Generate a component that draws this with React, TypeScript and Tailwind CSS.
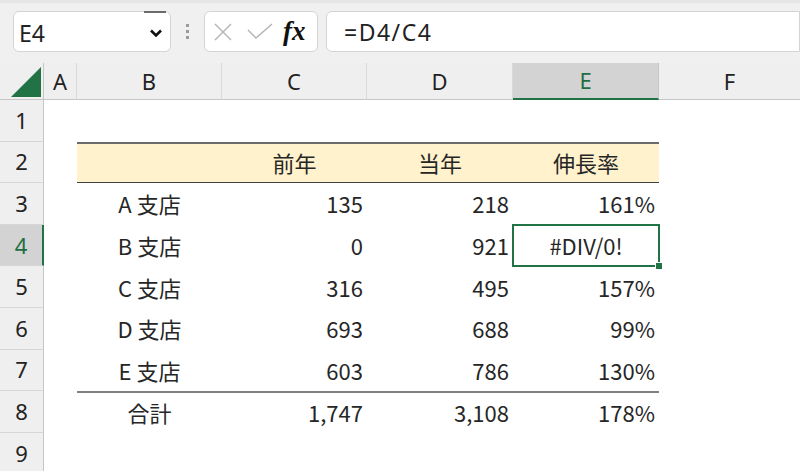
import React from "react";

const rows = [
  { n: 3, name: "A 支店", prev: "135", cur: "218", rate: "161%" },
  { n: 4, name: "B 支店", prev: "0", cur: "921", rate: "#DIV/0!" },
  { n: 5, name: "C 支店", prev: "316", cur: "495", rate: "157%" },
  { n: 6, name: "D 支店", prev: "693", cur: "688", rate: "99%" },
  { n: 7, name: "E 支店", prev: "603", cur: "786", rate: "130%" },
];

const sheetFont = { fontFamily: '"Noto Sans CJK JP", "Noto Sans", sans-serif' };
const uiFont = { fontFamily: '"Noto Sans", "Open Sans", sans-serif' };

function RowHead({ n, active }: { n: number; active?: boolean }) {
  return (
    <div
      className={
        "flex items-center justify-center border-b border-[#d6d6d6] border-r text-[22px] " +
        (active ? "bg-[#d3d3d3] text-[#1e6e42] border-r-2 border-r-[#217346]" : "bg-[#efefef] text-[#222] border-r-[#c6c6c6]")
      }
      style={uiFont}
    >
      {n}
    </div>
  );
}

function Cell({ children, align = "center", className = "" }: { children?: React.ReactNode; align?: "center" | "right"; className?: string }) {
  return (
    <div
      className={
        "flex items-center text-[22px] text-[#262626] " +
        (align === "right" ? "justify-end pr-[4px] " : "justify-center ") +
        className
      }
      style={sheetFont}
    >
      {children}
    </div>
  );
}

export default function App() {
  return (
    <div className="w-[800px] h-[471px] overflow-hidden bg-white flex flex-col">
      {/* formula bar */}
      <div className="shrink-0 h-[63px] bg-[#f0f0f0] border-t-[3px] border-t-[#e6e6e6] flex items-start pt-[8px]">
        <div className="relative ml-[13px] w-[158px] h-[41px] bg-white border border-[#d4d4d4] rounded-[6px] flex items-center justify-between pl-[5px] pr-[7px]">
          <span className="text-[23px] text-[#222] mt-[3px]" style={uiFont}>E4</span>
          <svg width="14" height="10" viewBox="0 0 14 10" className="mt-[2px]">
            <path d="M2 2.5 L7 7.5 L12 2.5" fill="none" stroke="#111" strokeWidth="2.6" />
          </svg>
          <div className="absolute top-[-1px] right-[4px] w-[22px] h-[2px] bg-[#6b6b6b]" />
        </div>
        <div className="w-[33px] h-[41px] flex flex-col items-center justify-center gap-[3px]">
          <div className="w-[3px] h-[3px] bg-[#9a9a9a]" />
          <div className="w-[3px] h-[3px] bg-[#9a9a9a]" />
          <div className="w-[3px] h-[3px] bg-[#9a9a9a]" />
        </div>
        <div className="w-[114px] h-[41px] bg-white border border-[#d4d4d4] rounded-[6px] flex items-center pl-[8px] gap-[14px]">
          <svg width="20" height="20" viewBox="0 0 20 20">
            <path d="M2 2 L18 18 M18 2 L2 18" stroke="#b3b3b3" strokeWidth="1.4" fill="none" />
          </svg>
          <svg width="26" height="18" viewBox="0 0 26 18">
            <path d="M1 7 L9 15 L25 1" stroke="#b3b3b3" strokeWidth="1.4" fill="none" />
          </svg>
          <span className="italic font-bold text-[27px] leading-none text-[#111] -ml-[4px]" style={{ fontFamily: '"Liberation Serif", serif' }}>
            fx
          </span>
        </div>
        <div className="ml-[8px] flex-1 h-[41px] bg-white border border-[#d4d4d4] rounded-l-[6px] flex items-center pl-[17px]">
          <span className="text-[23px] tracking-[1.5px] text-[#222] mt-[2px]" style={uiFont}>=D4/C4</span>
        </div>
      </div>

      {/* sheet */}
      <div className="shrink-0 grid grid-cols-[44px_33px_145px_145px_146px_146px_1fr] grid-rows-[37px_repeat(9,41.6px)]">
        {/* column headers */}
        <div className="bg-[#efefef] border-b border-[#c6c6c6] border-r border-r-[#c6c6c6] flex items-end justify-end pr-[2px] pb-[2px]">
          <svg width="30" height="30" viewBox="0 0 30 30">
            <path d="M30 0 L30 30 L0 30 Z" fill="#217346" />
          </svg>
        </div>
        {["A", "B", "C", "D"].map((c) => (
          <div key={c} className="bg-[#efefef] border-b border-[#c6c6c6] border-r border-r-[#d9d9d9] flex items-center justify-center text-[22px] text-[#222]" style={uiFont}>
            {c}
          </div>
        ))}
        <div className="bg-[#d3d3d3] border-b-2 border-[#217346] border-r border-r-[#c6c6c6] flex items-center justify-center text-[22px] text-[#1e6e42]" style={uiFont}>
          E
        </div>
        <div className="bg-[#efefef] border-b border-[#c6c6c6] flex items-center justify-center text-[22px] text-[#222]" style={uiFont}>
          F
        </div>

        {/* row 1 */}
        <RowHead n={1} />
        <div className="col-span-6" />

        {/* row 2 header */}
        <RowHead n={2} />
        <div />
        <Cell className="bg-[#fff2cc] border-t-2 border-t-[#6a6a6a] border-b border-b-[#404040]" />
        <Cell className="bg-[#fff2cc] border-t-2 border-t-[#6a6a6a] border-b border-b-[#404040]">前年</Cell>
        <Cell className="bg-[#fff2cc] border-t-2 border-t-[#6a6a6a] border-b border-b-[#404040]">当年</Cell>
        <Cell className="bg-[#fff2cc] border-t-2 border-t-[#6a6a6a] border-b border-b-[#404040]">伸長率</Cell>
        <div />

        {rows.map((r) => (
          <React.Fragment key={r.n}>
            <RowHead n={r.n} active={r.n === 4} />
            <div />
            <Cell>{r.name}</Cell>
            <Cell align="right">{r.prev}</Cell>
            <Cell align="right">{r.cur}</Cell>
            {r.n === 4 ? (
              <div className="relative">
                <Cell className="h-full">{r.rate}</Cell>
                <div className="absolute -inset-[1px] border-2 border-[#217346] pointer-events-none" />
                <div className="absolute -right-[4px] -bottom-[4px] w-[8px] h-[8px] bg-[#217346] border border-white" />
              </div>
            ) : (
              <Cell align="right">{r.rate}</Cell>
            )}
            <div />
          </React.Fragment>
        ))}

        {/* row 8 total */}
        <RowHead n={8} />
        <div />
        <Cell className="border-t-2 border-t-[#808080]">合計</Cell>
        <Cell align="right" className="border-t-2 border-t-[#808080]">1,747</Cell>
        <Cell align="right" className="border-t-2 border-t-[#808080]">3,108</Cell>
        <Cell align="right" className="border-t-2 border-t-[#808080]">178%</Cell>
        <div />

        <RowHead n={9} />
        <div className="col-span-6" />
      </div>
    </div>
  );
}
